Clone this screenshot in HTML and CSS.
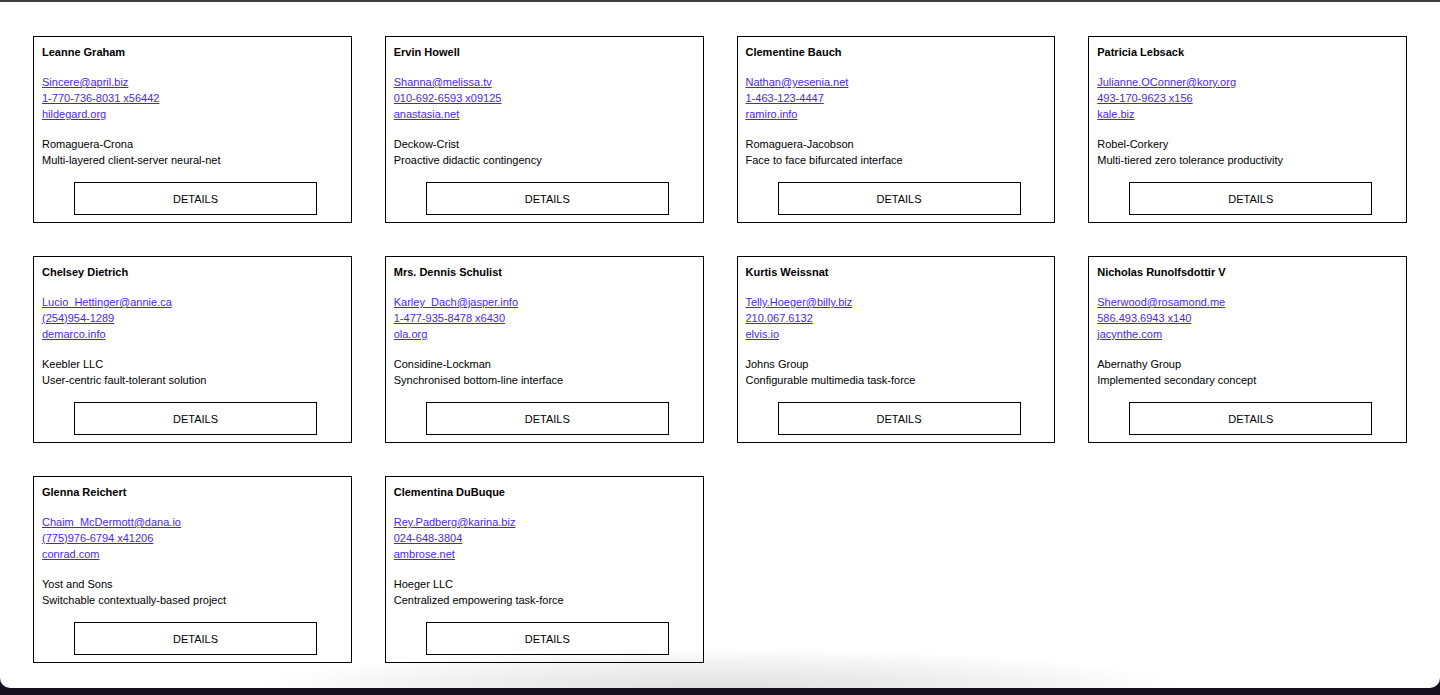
FILE: index.html
```html
<!DOCTYPE html>
<html lang="en">
<head>
<meta charset="utf-8">
<title>Users</title>
<link rel="stylesheet" href="styles.css">
</head>
<body>
<div class="window">
  <main class="grid">
    <article class="card">
      <div class="name">Leanne Graham</div>
      <div class="links"><a href="#">Sincere@april.biz</a><a href="#">1-770-736-8031 x56442</a><a href="#">hildegard.org</a></div>
      <div class="company"><span>Romaguera-Crona</span><span>Multi-layered client-server neural-net</span></div>
      <button class="details">DETAILS</button>
    </article>
    <article class="card">
      <div class="name">Ervin Howell</div>
      <div class="links"><a href="#">Shanna@melissa.tv</a><a href="#">010-692-6593 x09125</a><a href="#">anastasia.net</a></div>
      <div class="company"><span>Deckow-Crist</span><span>Proactive didactic contingency</span></div>
      <button class="details">DETAILS</button>
    </article>
    <article class="card">
      <div class="name">Clementine Bauch</div>
      <div class="links"><a href="#">Nathan@yesenia.net</a><a href="#">1-463-123-4447</a><a href="#">ramiro.info</a></div>
      <div class="company"><span>Romaguera-Jacobson</span><span>Face to face bifurcated interface</span></div>
      <button class="details">DETAILS</button>
    </article>
    <article class="card">
      <div class="name">Patricia Lebsack</div>
      <div class="links"><a href="#">Julianne.OConner@kory.org</a><a href="#">493-170-9623 x156</a><a href="#">kale.biz</a></div>
      <div class="company"><span>Robel-Corkery</span><span>Multi-tiered zero tolerance productivity</span></div>
      <button class="details">DETAILS</button>
    </article>
    <article class="card">
      <div class="name">Chelsey Dietrich</div>
      <div class="links"><a href="#">Lucio_Hettinger@annie.ca</a><a href="#">(254)954-1289</a><a href="#">demarco.info</a></div>
      <div class="company"><span>Keebler LLC</span><span>User-centric fault-tolerant solution</span></div>
      <button class="details">DETAILS</button>
    </article>
    <article class="card">
      <div class="name">Mrs. Dennis Schulist</div>
      <div class="links"><a href="#">Karley_Dach@jasper.info</a><a href="#">1-477-935-8478 x6430</a><a href="#">ola.org</a></div>
      <div class="company"><span>Considine-Lockman</span><span>Synchronised bottom-line interface</span></div>
      <button class="details">DETAILS</button>
    </article>
    <article class="card">
      <div class="name">Kurtis Weissnat</div>
      <div class="links"><a href="#">Telly.Hoeger@billy.biz</a><a href="#">210.067.6132</a><a href="#">elvis.io</a></div>
      <div class="company"><span>Johns Group</span><span>Configurable multimedia task-force</span></div>
      <button class="details">DETAILS</button>
    </article>
    <article class="card">
      <div class="name">Nicholas Runolfsdottir V</div>
      <div class="links"><a href="#">Sherwood@rosamond.me</a><a href="#">586.493.6943 x140</a><a href="#">jacynthe.com</a></div>
      <div class="company"><span>Abernathy Group</span><span>Implemented secondary concept</span></div>
      <button class="details">DETAILS</button>
    </article>
    <article class="card">
      <div class="name">Glenna Reichert</div>
      <div class="links"><a href="#">Chaim_McDermott@dana.io</a><a href="#">(775)976-6794 x41206</a><a href="#">conrad.com</a></div>
      <div class="company"><span>Yost and Sons</span><span>Switchable contextually-based project</span></div>
      <button class="details">DETAILS</button>
    </article>
    <article class="card">
      <div class="name">Clementina DuBuque</div>
      <div class="links"><a href="#">Rey.Padberg@karina.biz</a><a href="#">024-648-3804</a><a href="#">ambrose.net</a></div>
      <div class="company"><span>Hoeger LLC</span><span>Centralized empowering task-force</span></div>
      <button class="details">DETAILS</button>
    </article>
  </main>
</div>
</body>
</html>
```

FILE: styles.css
```css
html, body {
  margin: 0;
  padding: 0;
}

body {
  background: #15111f;
  height: 695px;
  overflow: hidden;
  font-family: "Liberation Sans", Arial, sans-serif;
  font-size: 11px;
  line-height: 16px;
  color: #000;
}

.window {
  position: relative;
  height: 686px;
  background: #fff;
  border-top: 2px solid #3c3c3e;
  border-radius: 0 0 10px 10px;
  overflow: hidden;
}

.window::after {
  content: "";
  position: absolute;
  left: 250px;
  right: 250px;
  bottom: -40px;
  height: 80px;
  background: radial-gradient(ellipse at center, rgba(0, 0, 0, 0.12) 0%, rgba(0, 0, 0, 0.05) 45%, rgba(0, 0, 0, 0) 70%);
  pointer-events: none;
}

.grid {
  display: grid;
  grid-template-columns: repeat(4, 1fr);
  column-gap: 33px;
  row-gap: 33px;
  padding: 34px 33px 0;
  align-items: start;
}

.card {
  display: flex;
  flex-direction: column;
  border: 1px solid #000;
  padding: 7px 8px 7px;
  height: 187px;
  box-sizing: border-box;
}

.name {
  font-weight: bold;
}

.links {
  display: flex;
  flex-direction: column;
  align-items: flex-start;
  margin-top: 14px;
}

.links a {
  color: #4a1fff;
  text-decoration: underline;
}

.company {
  display: flex;
  flex-direction: column;
  margin-top: 14px;
}

.details {
  margin: 14px 0 0 32px;
  width: 243px;
  height: 33px;
  padding: 0;
  background: #fff;
  border: 1px solid #000;
  border-radius: 0;
  font-family: "Liberation Sans", Arial, sans-serif;
  font-size: 11px;
  color: #000;
  cursor: pointer;
}
```
